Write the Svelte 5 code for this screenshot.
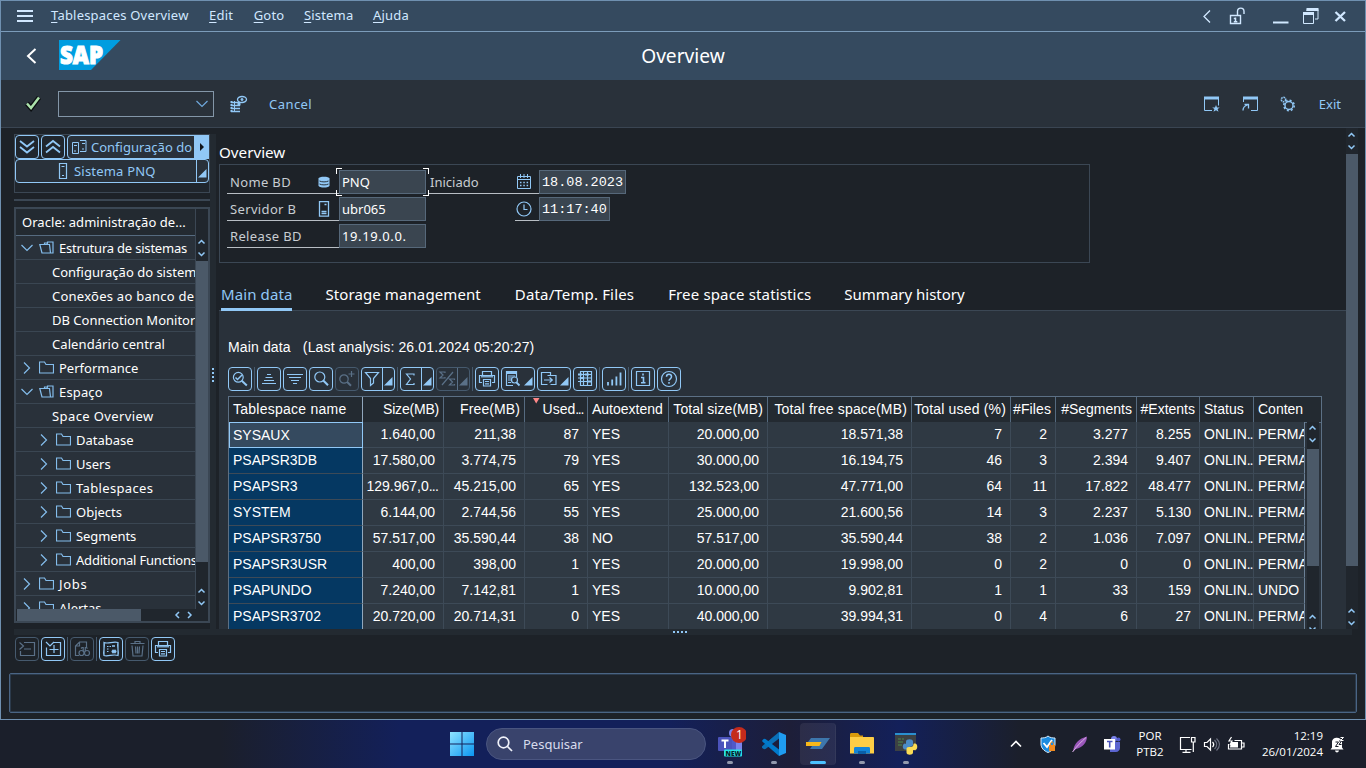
<script>
  const menu = ['Tablespaces Overview', 'Edit', 'Goto', 'Sistema', 'Ajuda'];

  // ls: letter spacing of the label in px
  const tree = [
    { t: 'Estrutura de sistemas', k: 'open', ls: -0.2 },
    { t: 'Configuração do sistema', k: 'leaf', ls: 0 },
    { t: 'Conexões ao banco de', k: 'leaf', ls: 0.25 },
    { t: 'DB Connection Monitor', k: 'leaf', ls: 0 },
    { t: 'Calendário central', k: 'leaf', ls: 0.08 },
    { t: 'Performance', k: 'closed', ls: 0 },
    { t: 'Espaço', k: 'open', ls: 0.15 },
    { t: 'Space Overview', k: 'leaf', ls: 0.4 },
    { t: 'Database', k: 'sub', ls: 0 },
    { t: 'Users', k: 'sub', ls: 0 },
    { t: 'Tablespaces', k: 'sub', ls: 0.35 },
    { t: 'Objects', k: 'sub', ls: 0 },
    { t: 'Segments', k: 'sub', ls: -0.1 },
    { t: 'Additional Functions', k: 'sub', ls: -0.2 },
    { t: 'Jobs', k: 'closed', ls: 0.7 },
    { t: 'Alertas', k: 'closed', ls: 0 }
  ];

  const tabs = ['Main data', 'Storage management', 'Data/Temp. Files', 'Free space statistics', 'Summary history'];

  const tools = [
    { i: 'zoomcheck' }, { sep: true },
    { i: 'asc' }, { i: 'desc' }, { i: 'find' }, { i: 'findnext', off: true }, { i: 'filter', split: true }, { sep: true },
    { i: 'sum', split: true }, { i: 'subtotal', split: true, off: true }, { sep: true },
    { i: 'print' }, { i: 'view', drop: true }, { i: 'export', drop: true }, { i: 'layout' }, { sep: true },
    { i: 'chart' }, { sep: true },
    { i: 'info' }, { i: 'help' }
  ];

  const bottomTools = [
    { i: 'collapse', off: true }, { i: 'expand' }, { sep: true },
    { i: 'docfind', off: true }, { sep: true },
    { i: 'select' }, { i: 'trash', off: true }, { i: 'print' }
  ];

  const head = [
    { t: 'Tablespace name', ls: 0.25 }, { t: 'Size(MB)', ls: -0.2 }, { t: 'Free(MB)', ls: 0.1 }, { t: 'Used...', ls: 0 },
    { t: 'Autoextend', ls: 0 }, { t: 'Total size(MB)', ls: 0.07 }, { t: 'Total free space(MB)', ls: 0.17 }, { t: 'Total used (%)', ls: 0.17 },
    { t: '#Files', ls: 0.1 }, { t: '#Segments', ls: 0 }, { t: '#Extents', ls: 0 }, { t: 'Status', ls: 0 }, { t: 'Conten', ls: 0 }
  ];
  const numeric = [1, 2, 3, 5, 6, 7, 8, 9, 10];
  const rows = [
    ['SYSAUX', '1.640,00', '211,38', '87', 'YES', '20.000,00', '18.571,38', '7', '2', '3.277', '8.255', 'ONLIN...', 'PERMA'],
    ['PSAPSR3DB', '17.580,00', '3.774,75', '79', 'YES', '30.000,00', '16.194,75', '46', '3', '2.394', '9.407', 'ONLIN...', 'PERMA'],
    ['PSAPSR3', '129.967,0...', '45.215,00', '65', 'YES', '132.523,00', '47.771,00', '64', '11', '17.822', '48.477', 'ONLIN...', 'PERMA'],
    ['SYSTEM', '6.144,00', '2.744,56', '55', 'YES', '25.000,00', '21.600,56', '14', '3', '2.237', '5.130', 'ONLIN...', 'PERMA'],
    ['PSAPSR3750', '57.517,00', '35.590,44', '38', 'NO', '57.517,00', '35.590,44', '38', '2', '1.036', '7.097', 'ONLIN...', 'PERMA'],
    ['PSAPSR3USR', '400,00', '398,00', '1', 'YES', '20.000,00', '19.998,00', '0', '2', '0', '0', 'ONLIN...', 'PERMA'],
    ['PSAPUNDO', '7.240,00', '7.142,81', '1', 'YES', '10.000,00', '9.902,81', '1', '1', '33', '159', 'ONLIN...', 'UNDO'],
    ['PSAPSR3702', '20.720,00', '20.714,31', '0', 'YES', '40.000,00', '39.994,31', '0', '4', '6', '27', 'ONLIN...', 'PERMA']
  ];
</script>

{#snippet glyph(name)}
  <svg class="glyph" width="24" height="24" viewBox="0 0 24 24" fill="none" stroke="currentColor" stroke-width="1.2">
    {#if name === 'zoomcheck'}
      <circle cx="10.3" cy="10.3" r="4.9" /><path d="M13.8 13.8l5 4.6" stroke-width="2" /><path d="M7.5 10.5l2 2 4.5-4.5" stroke-width="1.5" />
    {:else if name === 'asc'}
      <path d="M10 7.5h4M8.500 10.500h7M7 13.500h10M5 16.500h14" />
    {:else if name === 'desc'}
      <path d="M4 7.500h16M6 10.500h12M8 13.500h8M10 16.500h4" />
    {:else if name === 'find'}
      <circle cx="10.800" cy="10" r="5" /><path d="M14.300 13.500l4.700 4.800" stroke-width="2" />
    {:else if name === 'findnext'}
      <circle cx="9" cy="12" r="4.200" /><path d="M12.200 15l3.800 3.800" stroke-width="2" /><path d="M13.500 7h6M16.500 4v6" />
    {:else if name === 'filter'}
      <path d="M4.500 5.500h13l-5 6v4.500l-3 2.500v-7z" />
    {:else if name === 'sum'}
      <path d="M14 8.500v-1.500H6.500l4 5-4 5.500H14V16" />
    {:else if name === 'subtotal'}
      <path d="M9 6V5H4l3 3-3 3h5v-1M18.500 13v-1h-5l3 3-3 3h5v-1M17 5L6 18" />
    {:else if name === 'print'}
      <path d="M7.500 8.500v-4h9v4M7 15.500H4.500v-7h15v7H17M8.500 12.500h7v6.500h-7zM10 14.500h4M10 16.800h4" /><path d="M6 9.800h12" />
    {:else if name === 'view'}
      <path d="M12 18.500H5.500v-14h10v6" /><path d="M6 6h9" stroke-width="2" /><path d="M7 9h7M7 11h4M7 13h3M7 15.500h3" /><circle cx="13.500" cy="13" r="3" fill="#29313a" /><path d="M15.500 15.500l3 3" stroke-width="1.800" />
    {:else if name === 'export'}
      <path d="M10.500 17.500h-6v-12h9v3M10.500 8.500h8.500v9H13.500M7 13h8M12.500 10.500l2.800 2.500-2.800 2.500" />
    {:else if name === 'layout'}
      <path d="M7.500 4.500h11v14h-11zM5 7.500h14M5 11h14M5 14.500h14M10.500 4.500v14M14.500 4.500v14" /><path d="M5 7.500h4M12 7.500h4M8 11h3M14 14.500h4" stroke-width="2" />
    {:else if name === 'chart'}
      <path d="M6 18.500v-3.500M10.200 18.500v-6M14.400 18.500v-9M18.500 18.500V5.500" stroke-width="1.800" />
    {:else if name === 'info'}
      <path d="M5.500 4.500h13v14h-13z" /><path d="M10 10.500h2.500v5M10 15.800h4.500M12 6.500v2" stroke-width="1.600" />
    {:else if name === 'help'}
      <circle cx="12" cy="12" r="7.500" /><path d="M9.500 9.800c0-3.300 5-3.300 5 0 0 2-2.500 2-2.500 4M12 15v1.800" stroke-width="1.500" />
    {:else if name === 'collapse'}
      <path d="M9 5.500h10.500v13H5.500V14M4.500 5.500l4 3.500-4 3.500M9 12h7" />
    {:else if name === 'expand'}
      <path d="M13 5.500h6.500v13H5.500v-8M5 5l4 4 4-4M8.500 12.500h9M13 8v8" />
    {:else if name === 'docfind'}
      <path d="M9 18.500H5.500V9l4-4h7v5M9.500 5v4h-4" /><circle cx="11.500" cy="16" r="2.500" /><circle cx="17" cy="16" r="2.500" /><path d="M11 11.500l1-1h1.200v4M17.500 11.500l-1-1h-1.200v4" />
    {:else if name === 'select'}
      <path d="M5 5.500c4 1.800 9-1.500 14 0v13c-5-1.800-10 1.500-14 0zM5 5.500c1.500 4-1.500 9 0 13M19 5.500c-1.500 4 1.500 9 0 13" /><path d="M8 9.500h4M8 12h2.500M8 14.500h2.500" stroke-dasharray="1.500 1" /><path d="M13 9h3M12.500 14.500h5M13.500 12.700l3 3.600M16.500 12.700l-3 3.600" stroke-width="1.500" />
    {:else if name === 'trash'}
      <path d="M5.500 6.500h14M10 6V4.500h5V6M7 8.500l1 10.500h9l1-10.500M10.500 9.500l.5 7M12.500 9.500v7M14.500 9.500l-.5 7" />
    {/if}
  </svg>
{/snippet}

{#snippet tool(b)}
  {#if b.sep}
    <i class="sep"></i>
  {:else}
    <button class={['tb', b.off && 'off', (b.split || b.drop) && 'wide', b.split && 'split']}>
      {@render glyph(b.i)}
      {#if b.split || b.drop}<svg class="corner" width="9" height="9" viewBox="0 0 9 9"><path d="M8.500 0v8.500H0z" fill="currentColor" /></svg>{/if}
    </button>
  {/if}
{/snippet}

{#snippet label(t)}{#if t.endsWith('...')}{t.slice(0, -3)}<span class="dots">...</span>{:else}{t}{/if}{/snippet}

{#snippet arrows(horizontal)}
  <svg class={horizontal ? 'harr' : 'varr'} width={horizontal ? 24 : 12} height={horizontal ? 12 : 24} viewBox={horizontal ? '0 0 24 12' : '0 0 12 24'} fill="none" stroke="#91c8f6" stroke-width="1.500">
    {#if horizontal}
      <path d="M8 3L5 6l3 3M17 3l3 3-3 3" />
    {:else}
      <path d="M2.500 7.500L5.500 4.500l3 3M2.500 16.500l3 3 3-3" />
    {/if}
  </svg>
{/snippet}

<div class="screen">
  <div class="window">
    <nav class="menubar">
      <svg class="burger" width="16" height="12" viewBox="0 0 16 12"><path d="M0 1h16M0 6h16M0 11h16" stroke="#d1e8ff" stroke-width="2" /></svg>
      {#each menu as m}
        <span class="mi"><u>{m[0]}</u>{m.slice(1)}</span>
      {/each}
      <svg class="winctl" width="156" height="24" viewBox="0 0 156 24" fill="none" stroke="#d1e8ff">
        <path d="M11 6.500L5 12.500l6 6" stroke-width="1.300" />
        <path d="M31.500 11.500h10v8h-10zM38.500 11V7.500c0-4.500 6.500-4.500 6.500 0V10" stroke-width="1.400" /><path d="M36.500 13.500v4.500M34.800 14.500h2M34.800 17.800h3.500" stroke-width="1.500" />
        <path d="M74 18.500h15.500" stroke-width="2" />
        <path d="M104.500 9h10v10.500h-10z" /><path d="M104 9.500h11" stroke-width="3" /><path d="M108 7V5.500h11V15h-3" /><path d="M107.500 5.500h12" stroke-width="3" />
        <path d="M136.500 8l9.500 9M146 8l-9.500 9" stroke-width="2.300" />
      </svg>
    </nav>

    <header class="titlebar">
      <svg class="back" width="11" height="16" viewBox="0 0 11 16" fill="none" stroke="#fff" stroke-width="2"><path d="M9.500 1L2 8l7.500 7" /></svg>
      <svg class="logo" width="62" height="30" viewBox="0 0 62 30"><path d="M0 0h61.500L32 30H0z" fill="#009de0" /><text x="1" y="23.500" textLength="43" lengthAdjust="spacingAndGlyphs">SAP</text></svg>
      <h1>Overview</h1>
    </header>

    <div class="toolbar">
      <svg class="ok" width="18" height="17" viewBox="0 0 18 17" fill="none"><path d="M3 8.500l4 4.500 8-10.500" stroke="#0b0e10" stroke-width="5" /><path d="M3 8.500l4 4.500 8-10.500" stroke="#abe2ab" stroke-width="2.500" /></svg>
      <div class="combo"><svg width="14" height="8" viewBox="0 0 14 8" fill="none" stroke="#6fa8dc" stroke-width="1.200"><path d="M1.500 1l5.500 5.500L12.500 1" /></svg></div>
      <svg class="dbeye" width="18" height="18" viewBox="0 0 18 18" fill="none" stroke="#91c8f6"><path d="M1 7.500h9M1 10.500h9M1 13.500h9M1 16.500h9" stroke-width="1.600" /><path d="M1.500 6v11" stroke-dasharray="2 1" stroke-width="2" /><path d="M4.500 6v11" /><ellipse cx="12" cy="4.500" rx="4.500" ry="3" stroke-width="1.300" /><circle cx="12" cy="4.500" r="1" fill="#91c8f6" /><path d="M9 7.500v3" stroke-width="3" /></svg>
      <span class="lnk cancel">Cancel</span>
      <svg class="right" width="100" height="18" viewBox="0 0 100 18" fill="none" stroke="#91c8f6">
        <path d="M9 15.500H1.500v-13h14v8" /><path d="M1 3h15" stroke-width="3" /><path d="M13 10l1 2.500h2.800l-2.200 1.600.9 2.600-2.500-1.500-2.500 1.500.9-2.600-2.200-1.600H12z" fill="#91c8f6" stroke="none" />
        <path d="M40.500 7V2.500h14v13H48" /><path d="M40 3h15" stroke-width="3" /><path d="M40 15.500c0-3 1-4.500 4.500-5.500M41.500 9.500h4v4" stroke-width="1.300" />
        <circle cx="80.500" cy="4.500" r="2.200" stroke-width="1.600" stroke-dasharray="1.600 .7" /><circle cx="86" cy="10.500" r="4" stroke-width="1.400" /><circle cx="86" cy="10.500" r="5.200" stroke-width="1.600" stroke-dasharray="2 2.080" />
      </svg>
      <span class="lnk exit">Exit</span>
    </div>

    <div class="work">
      <aside class="side">
        <div class="panel">
          <div class="prow">
            <button class="tb"><svg class="glyph" width="24" height="24" viewBox="0 0 24 24" fill="none" stroke="currentColor" stroke-width="1.800"><path d="M5 6l7 5.500L19 6M5 12l7 5.500 7-5.500" /></svg></button>
            <button class="tb"><svg class="glyph" width="24" height="24" viewBox="0 0 24 24" fill="none" stroke="currentColor" stroke-width="1.800"><path d="M5 11.500L12 6l7 5.500M5 17.500L12 12l7 5.500" /></svg></button>
            <button class="cfg">
              <svg width="16" height="14" viewBox="0 0 16 14" fill="none" stroke="currentColor"><path d="M.5 2.500h6v11h-6zM2 5.500h3M2 11h2M8 .5h6v11H8M10 3.500h3M10 9h2" /></svg>
              <span>Configuração do</span><i class="more"></i>
            </button>
          </div>
          <button class="sys">
            <svg width="10" height="16" viewBox="0 0 10 16" fill="none" stroke="currentColor"><path d="M1.500.5h7v15h-7zM3.500 3.500h3M4 12.500h2" stroke-width="1.200" /></svg>
            <span>Sistema PNQ</span><i class="cut"></i>
            <svg class="corner" width="9" height="9" viewBox="0 0 9 9"><path d="M8.500 0v8.500H0z" fill="currentColor" /></svg>
          </button>
        </div>
        <hr class="bar" />
        <div class="treebox">
          <div class="tree">
            <div class="thead">Oracle: administração de...</div>
            {#each tree as n}
              <div class={['tn', n.k]}>
                {#if n.k === 'open'}
                  <svg class="chev" width="12" height="12" viewBox="0 0 12 12"><path d="M.5 3L6 8.500 11.500 3" /></svg>
                  <svg class="folder" width="15" height="13" viewBox="0 0 15 13"><path d="M3 12L.8 3.500h9.700l1 8.500zM5.500 3.500V2h2.500l.5 1.500M8.500 2.500V1h5.500v11h-2.500" /></svg>
                {:else if n.k !== 'leaf'}
                  <svg class="chev" width="12" height="12" viewBox="0 0 12 12"><path d="M3 .5L8.500 6 3 11.500" /></svg>
                  <svg class="folder" width="15" height="13" viewBox="0 0 15 13"><path d="M.5 12V1h5l1.500 2.500h7.500V12z" /></svg>
                {/if}
                <span style:letter-spacing="{n.ls}px">{n.t}</span>
              </div>
            {/each}
          </div>
          <div class="vs">{@render arrows(false)}<b></b><em></em>{@render arrows(false)}</div>
          <div class="hs"><b></b>{@render arrows(true)}</div>
        </div>
      </aside>
      <div class="vsplit"><i></i><i></i><i></i><i></i></div>

      <main class="main">
        <h2>Overview</h2>
        <section class="form">
          <div class="fc c1">
            <div class="fl"><span>Nome BD</span><svg width="12" height="12" viewBox="0 0 12 12"><path d="M.5 2.500C.5 0 11.500 0 11.500 2.500v7c0 2.700-11 2.700-11 0z" fill="#91c8f6" /><path d="M1.500 5c2.500 1.200 6.500 1.200 9 0M1.500 8c2.500 1.200 6.500 1.200 9 0" stroke="#1d2228" fill="none" stroke-width=".9" /></svg></div>
            <div class="fl"><span>Servidor B</span><svg width="12" height="16" viewBox="0 0 12 16" fill="none" stroke="#91c8f6"><path d="M1.500.7h9v14.500h-9zM6.500 3.500h2M3.500 10.500h5M3.500 12.500h5" stroke-width="1.300" /></svg></div>
            <div class="fl"><span>Release BD</span></div>
          </div>
          <div class="fc c2">
            <div class="fld focus">PNQ<i></i></div>
            <div class="fld">ubr065</div>
            <div class="fld rel">19.19.0.0.</div>
          </div>
          <div class="fc c3">
            <div class="fl"><span>Iniciado</span><svg width="16" height="16" viewBox="0 0 16 16" fill="none" stroke="#91c8f6"><path d="M1.500 2.500h13v12h-13zM1 5.500h14M4.500 0v4M8 0v4M11.500 0v4" /><path d="M4 8.500h9M4 11.500h9" stroke-width="1.500" stroke-dasharray="1.500 1.800" /></svg></div>
            <div class="fl short"><svg width="16" height="16" viewBox="0 0 16 16" fill="none" stroke="#91c8f6" stroke-width="1.200"><circle cx="8" cy="8" r="7" /><path d="M8 3.500V8.500h3.500" /></svg></div>
          </div>
          <div class="fc c4">
            <div class="fld mono date">18.08.2023</div>
            <div class="fld mono time">11:17:40</div>
          </div>
        </section>

        <div class="tabs">
          {#each tabs as t, i}<span class={['tab', i === 0 && 'on']}>{t}</span>{/each}
        </div>

        <section class="pane">
          <p class="cap">Main data&nbsp;&nbsp; (Last analysis: 26.01.2024 05:20:27)</p>
          <div class="tools">{#each tools as b}{@render tool(b)}{/each}</div>
          <div class="grid">
            <div class="gr gh">
              {#each head as h, i}
                <div class={['gc', numeric.includes(i) && 'num']} style:letter-spacing="{h.ls}px">{#if i === 3}<svg class="mark" width="7" height="6" viewBox="0 0 7 6"><path d="M0 0h6.500L3.200 5.500z" fill="#ff8888" /></svg>{/if}{@render label(h.t)}</div>
              {/each}
            </div>
            <div class="gbody">
              <div class="grows">
                {#each rows as r, y}
                  <div class="gr">
                    {#each r as c, i}
                      <div class={['gc', numeric.includes(i) && 'num', i === 0 && 'key', i === 0 && y === 0 && 'cur', c.length > 11 && 'tight']}>{@render label(c)}</div>
                    {/each}
                  </div>
                {/each}
              </div>
              <div class="vs gv">{@render arrows(false)}<b></b><em></em>{@render arrows(false)}</div>
            </div>
          </div>
        </section>
      </main>
      <div class="vs mv">{@render arrows(false)}<b></b><em></em>{@render arrows(false)}</div>
    </div>

    <div class="hsplit"><i></i><i></i><i></i><i></i></div>
    <div class="tools low">{#each bottomTools as b}{@render tool(b)}{/each}</div>
    <div class="status"></div>
  </div>

  <footer class="taskbar">
    <div class="cell start">
      <svg width="24" height="24" viewBox="0 0 24 24"><defs><linearGradient id="win" x1="0" y1="0" x2="1" y2="1"><stop offset="0" stop-color="#8fe3ff" /><stop offset="1" stop-color="#0a95f2" /></linearGradient></defs><path d="M0 0h11.500v11.500H0zM12.500 0H24v11.500H12.500zM0 12.500h11.500V24H0zM12.500 12.500H24V24H12.500z" fill="url(#win)" /></svg>
    </div>
    <div class="search">
      <svg width="16" height="16" viewBox="0 0 16 16" fill="none" stroke="#f0f2fa" stroke-width="1.700"><circle cx="6.500" cy="6.500" r="5.300" /><path d="M10.500 10.500l4.500 4.500" /></svg>
      <span>Pesquisar</span>
    </div>
    <div class="cell">
      <svg class="teams" width="32" height="34" viewBox="0 0 32 34"><circle cx="19" cy="8" r="4" fill="#7b83eb" /><path d="M15 12h13v13a6 6 0 0 1-6 4h-7z" fill="#7b83eb" /><path d="M11 12h11v17H11z" fill="#5059c9" /><rect x="4" y="12" width="14" height="14" rx="1" fill="#4b53bc" /><path d="M7.500 15.500h7M11 15.500V23" stroke="#fff" stroke-width="2" /><rect x="10" y="24.500" width="18" height="7" rx="1" fill="#27e4e4" /><text class="new" x="11.500" y="30.500">NEW</text><circle cx="25" cy="10" r="8" fill="#c42b1c" /><text class="one" x="22" y="14.300">1</text></svg>
      <i></i>
    </div>
    <div class="cell">
      <svg width="24" height="24" viewBox="0 0 24 24"><path d="M17 0L2.500 14 1.200 16.800 0 15.800v-1.500L17 .2z" fill="#0065a9" /><path d="M17 0v6.500L3.500 17 2 17.200.3 15.800v-1.300z" fill="#0a70b8" /><path d="M.3 8.200L2 6.800l1.500.2L17 17.500V24L.3 9.500z" fill="#007acc" /><path d="M17 0l7 3v18l-7 3z" fill="#1f9cf0" /></svg>
      <i></i>
    </div>
    <div class="cell active">
      <svg width="24" height="24" viewBox="0 0 24 24"><path d="M5 6h19l-8 11H4l2-3h7l2-4H2z" fill="#3d76ac" /><path d="M0 10h15.500l-2 4H0z" fill="#f8b81a" /></svg>
      <i></i>
    </div>
    <div class="cell">
      <svg width="24" height="24" viewBox="0 0 24 24"><path d="M0 2.500C0 1.500.5 1 1.500 1H8l2 2.500h3V8H0z" fill="#d99a0b" /><path d="M0 5h23c.7 0 1 .5 1 1v15.500H0z" fill="#fdcd45" /><path d="M4 21.500v-5c0-1 .5-1.500 1.500-1.500h13c1 0 1.500.5 1.500 1.500v5z" fill="#1284d8" /><path d="M8 22v-3h8v3z" fill="#0a5fa8" /></svg>
      <i></i>
    </div>
    <div class="cell">
      <svg width="24" height="24" viewBox="0 0 24 24"><path d="M1 1h21v18H1z" fill="#3d4143" /><path d="M1 1h21v2H1z" fill="#2a8fd0" /><path d="M4 7h3M8 7h2M4 10h5M4 13h4" stroke="#4f8a4c" /><path d="M12 12V9.500c0-3 7-3 7 0v3c0 3-5.500 1.500-5.500 5H11c-3 0-3-6 0-6z" fill="#4b8bc8" /><path d="M20 11.500h1c3 0 3 6.500 0 6.500h-2v2.500c0 3-6.500 3-6.500 0V17c0-2 2-2 4-2s3-1 3-3z" fill="#fbdc55" /></svg>
      <i></i>
    </div>

    <div class="tray">
      <svg width="32" height="24" viewBox="0 0 32 24" fill="none" stroke="#fff" stroke-width="1.600"><path d="M11 14.500l5-5 5 5" /></svg>
      <svg width="32" height="24" viewBox="0 0 32 24"><path d="M16 4c2 1.800 4.500 2 7 2v6c0 4-3 7-7 8.500C12 19 9 16 9 12V6c2.500 0 5-.2 7-2z" fill="#1b8be0" stroke="#d7edff" /><path d="M11.500 11l3.500 4 5-7" fill="none" stroke="#fff" stroke-width="1.800" /><rect x="17" y="13" width="6" height="6" fill="#f18a20" /><path d="M18.500 13v-1.500c0-2 3-2 3 0V13" stroke="#f18a20" fill="none" /></svg>
      <svg width="32" height="24" viewBox="0 0 32 24"><path d="M9 19.500C10 11.500 15 6.500 23 4.500 23 10.500 18.500 15.500 12 17z" fill="#9a57ba" /><path d="M8.500 20C13 14 17 10 22 5.500" stroke="#d9b3e4" fill="none" /></svg>
      <svg width="32" height="24" viewBox="0 0 32 24"><circle cx="18" cy="7" r="3" fill="#7b83eb" /><circle cx="22.500" cy="7.500" r="2" fill="#5059c9" /><path d="M14 10h10v6c0 2-2 4-4 4h-6z" fill="#5b64d0" /><rect x="8" y="7" width="11" height="10.500" fill="#fff" /><path d="M11 9.500h5.500M13.700 9.500V15.500" stroke="#4b53bc" stroke-width="1.600" /></svg>
      <div class="lang"><span>POR</span><span>PTB2</span></div>
      <svg class="dev" width="76" height="24" viewBox="0 0 76 24" fill="none" stroke="#fff" stroke-width="1.200">
        <path d="M14 5.500H4.500v12h11M10 17.500v2.500M6.500 20.300h8" /><path d="M15.500 5.500h3.500v4.500h-3.500zM17.300 10v10" />
        <path d="M28.500 10.500h2.500l3.500-3.500v11l-3.500-3.500h-2.500z" /><path d="M36.500 10c1.500 1.500 1.500 3.500 0 5" /><path d="M38.500 8c3 3 3 6 0 9M40.500 6.500c4 4 4 8 0 12" stroke="#6c7080" />
        <path d="M58.500 8.500h7v8.500h-13v-5M66 11h2v4h-2" /><path d="M55 10h7v5.500h-8z" fill="#fff" stroke="none" /><path d="M55.500 5L53 9h3l-2 4" />
      </svg>
      <div class="clock"><span>12:19</span><span>26/01/2024</span></div>
      <svg class="bell" width="16" height="18" viewBox="0 0 16 18"><path d="M2 12.500V7c0-5 9-6 10 0v5.500l1.500 2H.5zM5 15.500h4c-.5 2.500-3.500 2.500-4 0z" fill="#fff" /><path d="M5.500 7h3l-3 4.500h3M9 6h2.500L9 9.500h2.500" stroke="#1b1f2b" fill="none" /><path d="M10.500 2.500h3l-3 3h3" stroke="#fff" fill="none" /></svg>
    </div>
  </footer>
</div>

<style>
  :global(body) { background: #1d2228; }
  * { box-sizing: border-box; }
  .screen { width: 1366px; height: 768px; overflow: hidden; display: flex; flex-direction: column; font-family: "Noto Sans", sans-serif; font-size: 13px; color: #fff; line-height: 20px; white-space: nowrap; }
  svg { display: block; flex: none; }
  button { font: inherit; color: #91c8f6; padding: 0; margin: 0; background: none; }
  .window { height: 720px; flex: none; border: 1px solid #6f90b0; background: #1d2228; display: flex; flex-direction: column; }

  .menubar { height: 31px; flex: none; background: #354a5f; border-bottom: 1px solid #7c9cba; display: flex; align-items: center; color: #d1e8ff; padding: 0 10px 0 16px; }
  .burger { margin-right: 18px; }
  .mi { margin: 0 20.500px 2px 0; letter-spacing: .2px; }
  .mi:nth-of-type(n+3) { margin-right: 19.500px; }
  .mi u { text-underline-offset: 2px; }
  .winctl { margin-left: auto; }
  .titlebar { height: 48px; flex: none; background: #354a5f; display: flex; align-items: center; padding-left: 25px; }
  .back { margin-right: 22px; }
  .logo { overflow: visible; margin-bottom: 2px; }
  .logo text { font: 900 24px "Open Sans", sans-serif; fill: #fff; stroke: #fff; stroke-width: 1.100px; }
  h1 { flex: 1; font-size: 19.200px; font-weight: 400; margin: 0 0 1px -120px; text-align: center; }
  .toolbar { height: 48px; flex: none; background: #29313a; border-bottom: 1px solid #3a4552; display: flex; align-items: center; padding-left: 23px; color: #91c8f6; }
  .ok { margin-right: 16px; }
  .combo { width: 156px; height: 26px; border: 1px solid #8396a8; background: #29313a; display: flex; align-items: center; justify-content: flex-end; padding-right: 4px; }
  .dbeye { margin-left: 16px; }
  .cancel { margin-left: 21px; letter-spacing: .45px; }
  .right { margin-left: auto; }
  .exit { margin: 0 24px 0 16px; }

  .work { height: 501px; flex: none; display: flex; padding-left: 13px; }
  .side { width: 196px; padding-top: 6px; display: flex; flex-direction: column; }
  .panel { height: 59px; border: 1px solid #3b4754; background: #20262d; }
  .prow { display: flex; gap: 2px; }
  .tb { width: 24px; height: 24px; flex: none; border: 1px solid #91c8f6; border-radius: 4px; display: flex; position: relative; }
  .glyph { margin: -1px; }
  .tb.off { border-color: #465a6e; color: #5a7087; }
  .tb.wide { width: 34px; }
  .split { background: linear-gradient(90deg, transparent 20px, currentColor 20px 21px, transparent 21px); }
  .corner { position: absolute; right: 1px; bottom: 4px; }
  .cfg { width: 142px; height: 24px; flex: none; border: 1px solid #91c8f6; border-radius: 4px; display: flex; align-items: center; gap: 3px; padding-left: 4px; position: relative; background: #29313a; }
  .more { position: absolute; right: -1px; top: -1px; width: 15px; height: 24px; background: #91c8f6; }
  .more::after { content: ""; position: absolute; left: 6px; top: 8px; border: 4px solid transparent; border-left-color: #10151a; }
  .sys { width: 194px; height: 24px; border: 1px solid #91c8f6; border-radius: 4px; display: flex; align-items: center; gap: 6px; padding-left: 42px; position: relative; background: #29313a; letter-spacing: .2px; }
  .cut { position: absolute; right: 11px; top: 0; width: 1px; height: 22px; background: #91c8f6; }
  .bar { border: 0; height: 2px; width: 196px; margin: 6px 0; background: #3b4754; flex: none; }
  .treebox { height: 416px; flex: none; border: 2px solid #3b4754; background: #1d2228; display: grid; grid-template-columns: 180px 12px; grid-template-rows: 400px 12px; }
  .tree { overflow: hidden; background: #29313a; border-right: 1px solid #3b4754; }
  .thead { height: 27px; line-height: 26px; padding-left: 6px; background: #232a31; border-bottom: 1px solid #566b80; letter-spacing: .05px; }
  .tn { height: 24px; border-bottom: 1px solid #3a4652; display: flex; align-items: center; padding-left: 5px; }
  .tn svg { fill: none; stroke: #84bdec; stroke-width: 1.200; }
  .chev { margin-right: 6px; }
  .folder { margin-right: 5px; }
  .tn.leaf { padding-left: 36px; }
  .tn.sub { padding-left: 22px; }
  .vs { background: #20262d; display: flex; flex-direction: column; width: 12px; }
  .vs b { background: #4b5968; width: 12px; flex: none; }
  .vs em { flex: 1; }
  .treebox .vs { padding-top: 27px; }
  .treebox .vs b { height: 301px; margin-top: 1px; }
  .hs { grid-column: 1 / 3; background: #20262d; display: flex; align-items: center; padding-left: 1px; }
  .hs b { width: 124px; height: 12px; background: #4b5968; }
  .harr { margin-left: 30px; }
  .vsplit { width: 6px; flex: none; margin: 6px 3px 0 0; background: #232a31; display: flex; flex-direction: column; gap: 2px; align-items: center; justify-content: center; padding-bottom: 13px; }
  .vsplit i, .hsplit i { width: 2px; height: 2px; background: #91c8f6; }

  .main { width: 1127px; flex: none; display: flex; flex-direction: column; }
  h2 { font-size: 15.200px; font-weight: 400; margin: 13px 0 1px; line-height: 22px; height: 22px; }
  .form { width: 871px; height: 99px; flex: none; border: 1px solid #3b4754; padding: 5px 0 0 7px; display: flex; }
  .fc { display: flex; flex-direction: column; gap: 3px; }
  .fl { height: 24px; border-bottom: 1px solid #b8bec4; display: flex; align-items: center; color: #c8cdd2; padding: 0 9px 0 3px; }
  .fl svg { margin-left: auto; }
  .c1 { width: 112px; letter-spacing: .35px; }
  .c2 { width: 87px; margin-right: 2px; }
  .c3 { width: 111px; }
  .c3 .fl { padding: 0 7px 0 2px; }
  .c3 .short { margin-left: 87px; padding-left: 0; }
  .fld { height: 24px; line-height: 22px; border: 1px solid #56687a; background: #3a4550; padding-left: 2px; position: relative; }
  .rel { letter-spacing: .6px; }
  .focus i { position: absolute; inset: -3px -4px; --c: #fff; background: linear-gradient(var(--c), var(--c)) 0 0 / 6px 1px, linear-gradient(var(--c), var(--c)) 0 0 / 1px 6px, linear-gradient(var(--c), var(--c)) 100% 0 / 6px 1px, linear-gradient(var(--c), var(--c)) 100% 0 / 1px 6px, linear-gradient(var(--c), var(--c)) 0 100% / 6px 1px, linear-gradient(var(--c), var(--c)) 0 100% / 1px 6px, linear-gradient(var(--c), var(--c)) 100% 100% / 6px 1px, linear-gradient(var(--c), var(--c)) 100% 100% / 1px 6px; background-repeat: no-repeat; }
  .mono { font-family: "Liberation Mono", monospace; font-size: 13.500px; line-height: 24px; }
  .date { width: 87px; }
  .time { width: 71px; }

  .tabs { height: 48px; flex: none; border-bottom: 1px solid #3b4754; display: flex; align-items: flex-end; gap: 33px; padding-left: 2px; font-size: 15px; letter-spacing: .1px; }
  .tab { height: 28px; line-height: 22px; border-bottom: 3px solid transparent; margin-bottom: -1px; }
  .tab:nth-child(3) { margin-left: 1px; letter-spacing: .15px; }
  .tab:nth-child(4) { margin-left: 1px; letter-spacing: .15px; }
  .tab:nth-child(5) { letter-spacing: 0; }
  .on { color: #91c8f6; border-color: #91c8f6; }

  .pane { flex: 1; min-height: 0; background: #29313a; padding-left: 9px; font-family: "Liberation Sans", sans-serif; font-size: 14px; overflow: hidden; }
  .cap { margin: 0; padding-top: 26px; height: 56px; white-space: pre; letter-spacing: .14px; }
  .tools { display: flex; gap: 2px; height: 24px; }
  .sep { width: 1px; height: 24px; background: #465a6e; }
  .grid { width: 1094px; margin-top: 5px; border: 1px solid #5c7085; }
  .gr { display: grid; grid-template-columns: 134px 81px 81px 63px 81px 99px 144px 99px 45px 81px 63px 54px 51px; }
  .gh { background: #232a31; border-bottom: 1px solid #566b80; margin-bottom: -1px; }
  .gc { height: 26px; line-height: 25px; padding-left: 4px; border-right: 1px solid #3d4a57; border-bottom: 1px solid #3d4a57; background: #2f3943; overflow: hidden; }
  .gh .gc { height: 25px; line-height: 25px; background: none; border-color: #566b80; border-bottom: 0; position: relative; }
  .gh .gc:last-child { border-right: 0; }
  .gh .gc:first-child, .gc.key { border-right-color: #91a7bc; }
  .num { text-align: right; padding: 0 8px 0 0; }
  .gh .num { padding-right: 4px; }
  .tight { padding-right: 5px; }
  .dots { letter-spacing: -1.300px; }
  .tight .dots { letter-spacing: -.800px; }
  .key { background: #053862; }
  .key.cur { background: #354a5f; box-shadow: inset 0 0 0 1px #91c8f6; line-height: 27px; border: 0; }
  .mark { position: absolute; left: 8px; top: 1px; }
  .gbody { display: flex; }
  .grows .gc:last-child { border-right-color: #6b8096; }
  .gv { height: 213px; margin-left: 2px; }
  .gv b { height: 117px; margin-top: 3px; }
  .gv em { flex: none; height: 45px; }
  .mv { height: 501px; padding-top: 1px; }
  .mv b { height: 412px; margin-top: 1px; }

  .hsplit { height: 6px; flex: none; margin: 0 13px; background: #232a31; display: flex; gap: 2px; align-items: center; padding-left: 659px; }
  .low { margin: 2px 0 0 14px; }
  .status { height: 40px; margin: 12px 8px 0; border: 1px solid #4a6585; box-shadow: inset 0 0 0 1px #2b3a4b; border-radius: 2px; background: #1d232a; flex: none; }

  .taskbar { height: 48px; display: flex; align-items: center; padding-left: 439px; background: linear-gradient(90deg, #1b1f2b 0, #1b1f2b 220px, #13205a 400px, #13205a 670px, #1d1e38 790px, #13205a 900px, #1b1f2b 1020px); }
  .cell { width: 44px; height: 42px; display: flex; align-items: center; justify-content: center; position: relative; border-radius: 4px; }
  .cell i { position: absolute; bottom: 1px; width: 6px; height: 3px; border-radius: 2px; background: #9299ad; }
  .teams { margin-bottom: 4px; }
  .active { background: rgba(255, 255, 255, .07); border-right: 1px solid #34395a; width: 36px; margin: 0 4px; }
  .active i { width: 16px; background: #4cc2ff; }
  .search { width: 220px; height: 32px; margin: 0 2px 0 3px; border-radius: 16px; border: 1px solid #4a5580; background: #39436c; display: flex; align-items: center; gap: 10px; padding-left: 10px; color: #d8dcec; }
  .start { padding-left: 1px; }
  .new { font: 900 6.500px "Open Sans", sans-serif; fill: #06202a; }
  .one { font: 12px "Open Sans", sans-serif; fill: #fff; }
  .tray { margin-left: auto; display: flex; align-items: center; padding-right: 20px; font: 11.500px/16px "Open Sans", sans-serif; }
  .lang { width: 44px; text-align: center; display: flex; flex-direction: column; }
  .dev { margin-left: 4px; }
  .clock { width: 71px; display: flex; flex-direction: column; text-align: right; }
  .bell { margin-left: 7px; }
</style>
